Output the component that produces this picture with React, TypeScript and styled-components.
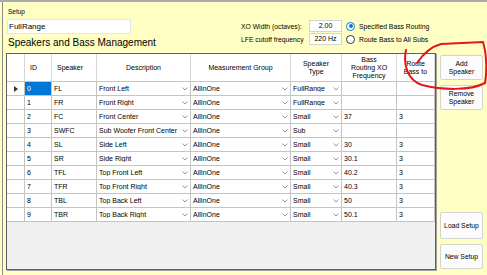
import React from "react";
import styled, { createGlobalStyle } from "styled-components";

type Row = {
    id: string;
    speaker: string;
    description: string;
    group: string;
    type: string;
    xo: string;
    route: string;
};

const rows: Row[] = [
    { id: "0", speaker: "FL", description: "Front Left", group: "AllInOne", type: "FullRange", xo: "", route: "" },
    { id: "1", speaker: "FR", description: "Front Right", group: "AllInOne", type: "FullRange", xo: "", route: "" },
    { id: "2", speaker: "FC", description: "Front Center", group: "AllInOne", type: "Small", xo: "37", route: "3" },
    { id: "3", speaker: "SWFC", description: "Sub Woofer Front Center", group: "AllInOne", type: "Sub", xo: "", route: "" },
    { id: "4", speaker: "SL", description: "Side Left", group: "AllInOne", type: "Small", xo: "30", route: "3" },
    { id: "5", speaker: "SR", description: "Side Right", group: "AllInOne", type: "Small", xo: "30.1", route: "3" },
    { id: "6", speaker: "TFL", description: "Top Front Left", group: "AllInOne", type: "Small", xo: "40.2", route: "3" },
    { id: "7", speaker: "TFR", description: "Top Front Right", group: "AllInOne", type: "Small", xo: "40.3", route: "3" },
    { id: "8", speaker: "TBL", description: "Top Back Left", group: "AllInOne", type: "Small", xo: "50", route: "3" },
    { id: "9", speaker: "TBR", description: "Top Back Right", group: "AllInOne", type: "Small", xo: "50.1", route: "3" },
];

const COLUMNS = "18px 27px 45px 94px 100px 51px 55px 38px";

const Chevron = () => (
    <svg width="6" height="4" viewBox="0 0 6 4">
        <path d="M0.5 0.5 L3 3 L5.5 0.5" fill="none" stroke="#8a8a8a" strokeWidth="0.9" />
    </svg>
);

const ComboCell = ({ value }: { value: string }) => (
    <StyledCell>
        <StyledComboText>{value}</StyledComboText>
        <StyledComboArrow>
            <Chevron />
        </StyledComboArrow>
    </StyledCell>
);

export default function App() {
    return (
        <>
            <GlobalStyle />
            <StyledFrame>
                <StyledPanel>
                    <StyledTop>
                        <StyledSetupBlock>
                            <StyledSmallLabel>Setup</StyledSmallLabel>
                            <StyledSetupBox>FullRange</StyledSetupBox>
                            <StyledHeading>Speakers and Bass Management</StyledHeading>
                        </StyledSetupBlock>
                        <StyledOptions>
                            <StyledOptionRow>
                                <StyledOptionLabel>XO Width (octaves):</StyledOptionLabel>
                                <StyledValueBox>2.00</StyledValueBox>
                                <StyledRadio $checked />
                                <StyledRadioLabel>Specified Bass Routing</StyledRadioLabel>
                            </StyledOptionRow>
                            <StyledOptionRow>
                                <StyledOptionLabel>LFE cutoff frequency</StyledOptionLabel>
                                <StyledValueBox>220 Hz</StyledValueBox>
                                <StyledRadio />
                                <StyledRadioLabel>Route Bass to All Subs</StyledRadioLabel>
                            </StyledOptionRow>
                        </StyledOptions>
                    </StyledTop>

                    <StyledMain>
                        <StyledGrid>
                            <StyledGridRow $header>
                                <StyledHeaderCell />
                                <StyledHeaderCell $align="left">ID</StyledHeaderCell>
                                <StyledHeaderCell $align="left">Speaker</StyledHeaderCell>
                                <StyledHeaderCell>Description</StyledHeaderCell>
                                <StyledHeaderCell>Measurement Group</StyledHeaderCell>
                                <StyledHeaderCell>
                                    Speaker
                                    <br />
                                    Type
                                </StyledHeaderCell>
                                <StyledHeaderCell>
                                    Bass
                                    <br />
                                    Routing XO
                                    <br />
                                    Frequency
                                </StyledHeaderCell>
                                <StyledHeaderCell>
                                    Route
                                    <br />
                                    Bass to
                                </StyledHeaderCell>
                            </StyledGridRow>
                            {rows.map((row, i) => (
                                <StyledGridRow key={row.id}>
                                    <StyledRowHeader>{i === 0 ? <StyledArrow /> : null}</StyledRowHeader>
                                    <StyledCell $selected={i === 0}>{row.id}</StyledCell>
                                    <StyledCell>{row.speaker}</StyledCell>
                                    <ComboCell value={row.description} />
                                    <ComboCell value={row.group} />
                                    <ComboCell value={row.type} />
                                    <StyledCell>{row.xo}</StyledCell>
                                    <StyledCell>{row.route}</StyledCell>
                                </StyledGridRow>
                            ))}
                            <StyledGridFill />
                        </StyledGrid>

                        <StyledButtonColumn>
                            <StyledButtonGroup>
                                <StyledButton>
                                    Add
                                    <br />
                                    Speaker
                                </StyledButton>
                                <StyledButton>
                                    Remove
                                    <br />
                                    Speaker
                                </StyledButton>
                            </StyledButtonGroup>
                            <StyledButtonGroup>
                                <StyledButton $tall>Load Setup</StyledButton>
                                <StyledButton>New Setup</StyledButton>
                            </StyledButtonGroup>
                        </StyledButtonColumn>
                    </StyledMain>
                </StyledPanel>

                {/* hand drawn annotation around the Add Speaker button */}
                <StyledAnnotation width="487" height="275" viewBox="0 0 487 275">
                    <path
                        d="M417 63 C423 54 430 47 441 44 L483 42 C487 55 487 72 485 83 C470 91 442 90 422 85 C407 80 403 64 406 50"
                        fill="none"
                        stroke="#e8141c"
                        strokeWidth="2"
                        strokeLinecap="round"
                    />
                </StyledAnnotation>
            </StyledFrame>
        </>
    );
}

// ------------------------------------------------------------------ //
// ----------------------------- Style ------------------------------ //
// ------------------------------------------------------------------ //

const GlobalStyle = createGlobalStyle`
    html, body {
        margin: 0;
        padding: 0;
        background: #ffffc4;
    }
    body {
        font-family: "Liberation Sans", Arial, sans-serif;
        color: #000;
    }
`;

const StyledFrame = styled.div`
    position: relative;
    width: 487px;
    height: 275px;
    box-sizing: border-box;
    border-top: 2px solid #a9a9a9;
    padding-left: 2px;
    background: #ffffc4;
    overflow: hidden;
`;

const StyledPanel = styled.div`
    display: flex;
    flex-direction: column;
    height: 100%;
    border-left: 1px solid #8c8c8c;
`;

const StyledTop = styled.div`
    display: flex;
    height: 51px;
`;

const StyledSetupBlock = styled.div`
    display: flex;
    flex-direction: column;
    width: 238px;
    padding: 5px 0 0 4px;
    box-sizing: border-box;
`;

const StyledSmallLabel = styled.div`
    font-size: 6.5px;
    line-height: 10px;
    padding-left: 1px;
`;

const StyledSetupBox = styled.div`
    width: 124px;
    height: 15px;
    margin-top: 2px;
    box-sizing: border-box;
    background: #fff;
    border: 1px solid #e6e6e6;
    font-size: 8px;
    line-height: 13px;
    padding-left: 1px;
`;

const StyledHeading = styled.div`
    margin-top: 2px;
    font-size: 10px;
    line-height: 14px;
    padding-left: 1px;
`;

const StyledOptions = styled.div`
    display: flex;
    flex-direction: column;
    gap: 1px;
    padding-top: 18px;
`;

const StyledOptionRow = styled.div`
    display: flex;
    align-items: center;
    height: 12px;
`;

const StyledOptionLabel = styled.div`
    width: 68px;
    font-size: 6.8px;
    white-space: nowrap;
`;

const StyledValueBox = styled.div`
    width: 33px;
    height: 12px;
    box-sizing: border-box;
    background: #fff;
    border: 1px solid #d4d4d4;
    font-size: 7px;
    line-height: 10px;
    text-align: center;
`;

const StyledRadio = styled.div<{ $checked?: boolean }>`
    width: 9px;
    height: 9px;
    margin-left: 4px;
    box-sizing: border-box;
    border-radius: 50%;
    background: #fff;
    border: 1px solid ${({ $checked }) => ($checked ? "#0078d7" : "#333")};
    display: flex;
    align-items: center;
    justify-content: center;

    &::after {
        content: "";
        width: 4px;
        height: 4px;
        border-radius: 50%;
        background: ${({ $checked }) => ($checked ? "#0078d7" : "transparent")};
    }
`;

const StyledRadioLabel = styled.div`
    margin-left: 4px;
    font-size: 6.8px;
    white-space: nowrap;
`;

const StyledMain = styled.div`
    display: flex;
    gap: 4px;
    padding-left: 3px;
    height: 217px;
`;

const StyledGrid = styled.div`
    display: flex;
    flex-direction: column;
    width: 430px;
    height: 217px;
    box-sizing: border-box;
    border: 1px solid #5f5f5f;
    box-shadow: 1px 1px 0 #a0a0a0;
    background: #f0f0f0;
    font-size: 7px;
`;

const StyledGridRow = styled.div<{ $header?: boolean }>`
    display: grid;
    grid-template-columns: ${COLUMNS};
    height: ${({ $header }) => ($header ? "28px" : "14px")};
    flex-shrink: 0;
`;

const StyledHeaderCell = styled.div<{ $align?: "left" | "center" }>`
    display: flex;
    align-items: center;
    justify-content: ${({ $align }) => ($align === "left" ? "flex-start" : "center")};
    text-align: center;
    padding: 0 0 0 ${({ $align }) => ($align === "left" ? "5px" : "0")};
    background: #fff;
    border-right: 1px solid #d6d6d6;
    border-bottom: 1px solid #c4c4c4;
    line-height: 8px;
    overflow: hidden;
`;

const StyledRowHeader = styled.div`
    display: flex;
    align-items: center;
    justify-content: center;
    background: #fff;
    border-right: 1px solid #c4c4c4;
    border-bottom: 1px solid #c4c4c4;
`;

const StyledArrow = styled.div`
    width: 0;
    height: 0;
    border-top: 3px solid transparent;
    border-bottom: 3px solid transparent;
    border-left: 4px solid #333;
`;

const StyledCell = styled.div<{ $selected?: boolean }>`
    display: flex;
    align-items: center;
    padding-left: 2px;
    background: ${({ $selected }) => ($selected ? "#0078d7" : "#fff")};
    color: ${({ $selected }) => ($selected ? "#fff" : "#000")};
    border-right: 1px solid #c4c4c4;
    border-bottom: 1px solid #c4c4c4;
    white-space: nowrap;
    overflow: hidden;
`;

const StyledComboText = styled.span`
    flex: 1;
    overflow: hidden;
`;

const StyledComboArrow = styled.span`
    display: flex;
    align-items: center;
    justify-content: center;
    width: 11px;
    height: 100%;
`;

const StyledGridFill = styled.div`
    flex: 1;
`;

const StyledButtonColumn = styled.div`
    display: flex;
    flex-direction: column;
    justify-content: space-between;
    width: 43px;
    padding: 2px 0 1px 0;
    box-sizing: border-box;
`;

const StyledButtonGroup = styled.div`
    display: flex;
    flex-direction: column;
    gap: 5px;
`;

const StyledButton = styled.div<{ $tall?: boolean }>`
    display: flex;
    align-items: center;
    justify-content: center;
    height: ${({ $tall }) => ($tall ? "27px" : "25px")};
    box-sizing: border-box;
    background: #fcfcfc;
    border: 1px solid #d3d3d3;
    border-radius: 2px;
    font-size: 6.8px;
    line-height: 8px;
    text-align: center;
`;

const StyledAnnotation = styled.svg`
    position: absolute;
    left: 0;
    top: -2px;
    pointer-events: none;
`;
